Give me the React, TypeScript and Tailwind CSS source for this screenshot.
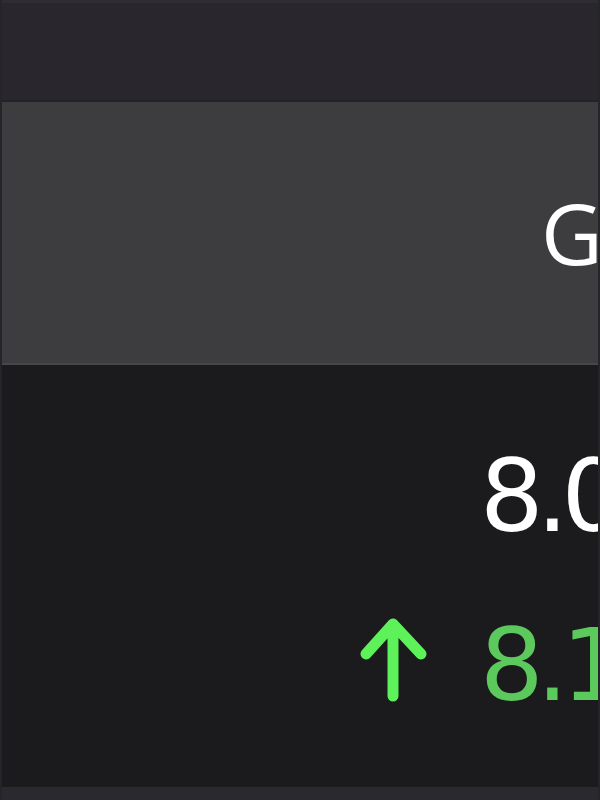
import React from "react";

const ArrowUp = () => (
  <svg width="67" height="86" viewBox="0 0 67 86" fill="none" className="block">
    <path
      d="M33 80V8M6 38L33 8L61 38"
      stroke="#5ef25a"
      strokeWidth="11"
      strokeLinecap="round"
      strokeLinejoin="round"
    />
  </svg>
);

export default function App() {
  return (
    <div className="h-[800px] w-[600px] overflow-hidden flex flex-col bg-[#1b1b1d] border-x-2 border-[#252428]">
      {/* top bar */}
      <div className="h-[102px] shrink-0 bg-[#29272d] border-t-[3px] border-[#2f2d34] border-b-2 border-b-[#232227]" />

      {/* column header */}
      <div className="h-[263px] shrink-0 flex items-center bg-[#3d3d40] border-b-2 border-b-[#47474a] pl-[539px]">
        <span className="text-[85px] leading-none text-white whitespace-nowrap font-['Open_Sans',sans-serif]">
          G
        </span>
      </div>

      {/* values */}
      <div className="flex-1 flex flex-col pt-[82px] font-['DejaVu_Sans',sans-serif] text-[100px] leading-none tracking-[-7px] whitespace-nowrap">
        <div className="flex">
          <div className="w-[478px] shrink-0" />
          <span className="text-white">8.0</span>
        </div>
        <div className="flex items-start mt-[69px]">
          <div className="w-[478px] shrink-0 flex justify-end pr-[53px]">
            <ArrowUp />
          </div>
          <span className="text-[#5cc95c]">8.1</span>
        </div>
      </div>

      {/* bottom bar */}
      <div className="h-[13px] shrink-0 bg-[#2a2930]" />
    </div>
  );
}
